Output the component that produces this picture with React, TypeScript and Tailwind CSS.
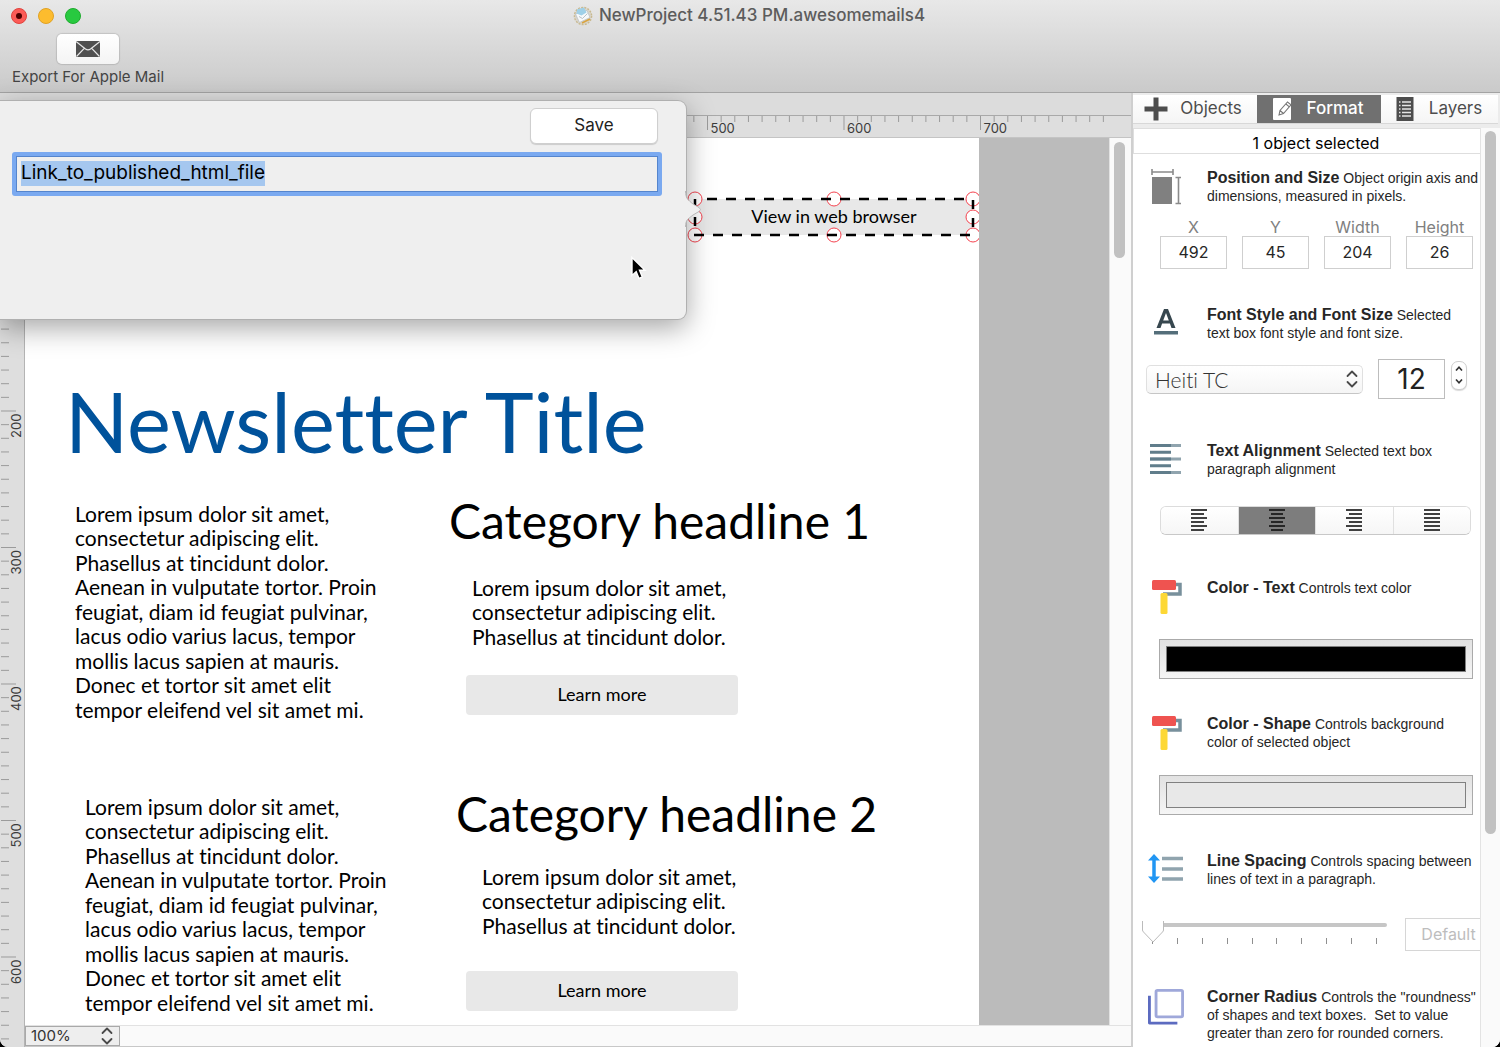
import { useState } from "react";
import type { ReactNode } from "react";
import clsx from "clsx";

// rulers and canvas are drawn at this many pixels per document unit
const SCALE = 1.365;

const LOREM = [
  "Lorem ipsum dolor sit amet,",
  "consectetur adipiscing elit.",
  "Phasellus at tincidunt dolor.",
  "Aenean in vulputate tortor. Proin",
  "feugiat, diam id feugiat pulvinar,",
  "lacus odio varius lacus, tempor",
  "mollis lacus sapien at mauris.",
  "Donec et tortor sit amet elit",
  "tempor eleifend vel sit amet mi.",
];

const ALIGNMENTS = ["left", "center", "right", "justify"] as const;

function TitleBar() {
  return (
    <header className="relative h-[93px] shrink-0 border-b border-[#a3a3a3] bg-linear-to-b from-[#e8e8e8] to-[#cacaca]">
      <div className="flex h-8 items-center">
        <div className="flex flex-1 gap-[11px] pb-px pl-[11px]">
          <button aria-label="Close" className="flex size-4 items-center justify-center rounded-full border border-[#e0443e] bg-[#fc5b57]">
            <span className="size-[6px] rounded-full bg-[#4d0000]" />
          </button>
          <button aria-label="Minimize" className="size-4 rounded-full border border-[#e0a225] bg-[#fdbc2e]" />
          <button aria-label="Zoom" className="size-4 rounded-full border border-[#1fac2e] bg-[#28c940]" />
        </div>
        <div className="flex items-center gap-[6px]">
          <DocumentIcon />
          <h1 className="text-[17px] font-medium text-[#5c5c5c]">NewProject 4.51.43 PM.awesomemails4</h1>
        </div>
        <div className="flex-1 pr-[13px]" />
      </div>
      <div className="flex w-[176px] flex-col items-center pt-[2px]">
        <button
          id="export"
          aria-labelledby="export-label"
          className="flex h-[30px] w-[62px] items-center justify-center rounded-[5px] bg-linear-to-b from-white to-[#f4f4f4] shadow-[0_0_1px_1px_rgba(0,0,0,0.12)]"
        >
          <svg width="24" height="16" viewBox="0 0 24 16">
            <rect width="24" height="16" fill="#505050" />
            <path d="M0 0.5 L9.5 8 Q12 9.8 14.5 8 L24 0.5 M0.5 15.5 L8.5 7.2 M23.5 15.5 L15.5 7.2" fill="none" stroke="#e8e8e8" strokeWidth="1.2" />
          </svg>
        </button>
        <label id="export-label" htmlFor="export" className="mt-[3px] text-[15px] leading-5 text-[#444]">
          Export For Apple Mail
        </label>
      </div>
    </header>
  );
}

function DocumentIcon() {
  return (
    <svg width="20" height="20" viewBox="0 0 20 20">
      <circle cx="10" cy="10" r="8.6" fill="#d9d5cb" stroke="#c9b98f" strokeWidth="1.4" strokeDasharray="2 1.2" />
      <path d="M2.5 8 L14 4.5 L17 11.5 L6.5 16.5 Z" fill="#f6f8fa" stroke="#b7bdc2" strokeWidth="0.7" />
      <path d="M4 3.5 L11 1.5 L13.5 6.5 L8.5 9.5 L3.5 7.5 Z" fill="#9fd0e8" />
      <path d="M6 10.5 L9.5 12.5 L14.5 7.5" fill="none" stroke="#b9c0c5" />
      <path d="M9 17 L17 13" stroke="#d9a441" strokeWidth="1.6" />
    </svg>
  );
}

function HorizontalRuler() {
  const ticks = Array.from({ length: 80 }, (_, i) => i);
  return (
    <svg className="block h-[23px] w-full border-y border-t-[#a9a9a9] border-b-[#c4c4c4] bg-[#dedede]">
      {ticks.map((i) => {
        const x = 25 + i * 10 * SCALE;
        const major = i % 10 === 0;
        return (
          <g key={i}>
            <line x1={x} x2={x} y1="0" y2={major ? 14 : 6} stroke="#9b9b9b" />
            {major && (
              <text x={x + 3} y="17" fontSize="13" fill="#3c3c3c">
                {i * 10}
              </text>
            )}
          </g>
        );
      })}
    </svg>
  );
}

function VerticalRuler() {
  const ticks = Array.from({ length: 67 }, (_, i) => i);
  return (
    <svg className="block h-full w-[25px] shrink-0 border-r border-[#b4b4b4] bg-[#dedede]">
      {ticks.map((i) => {
        const y = i * 10 * SCALE;
        const major = i % 10 === 0;
        return (
          <g key={i}>
            <line x1="1" x2={major ? 16 : 9} y1={y} y2={y} stroke="#9b9b9b" />
            {major && (
              <text transform={`translate(21 ${y + 27}) rotate(-90)`} fontSize="13" fill="#3c3c3c">
                {i * 10}
              </text>
            )}
          </g>
        );
      })}
    </svg>
  );
}

function TextBox({ lines, className }: { lines: string[]; className: string }) {
  return (
    <p className={clsx("absolute text-[21px] leading-6 whitespace-nowrap text-black", className)}>
      {lines.map((line) => (
        <span key={line} className="block odd:h-6 even:h-[25px]">
          {line}
        </span>
      ))}
    </p>
  );
}

function SelectionHandles() {
  const handles = [
    [8, 8], [147, 8], [286, 8],
    [8, 26], [286, 26],
    [8, 44], [147, 44], [286, 44],
  ];
  return (
    <svg className="pointer-events-none absolute top-[53px] left-[662px]" width="294" height="52">
      {handles.map(([x, y]) => (
        <circle key={`${x}-${y}`} cx={x} cy={y} r="7" fill="#fff" stroke="#f4434f" />
      ))}
      <g stroke="#000" strokeWidth="2.5">
        <path d="M20 8 H286" strokeDasharray="10 9" />
        <path d="M7 44 H286" strokeDasharray="10 9" />
        <path d="M8 8 V44 M286 9 V44" strokeDasharray="9 9" />
      </g>
    </svg>
  );
}

function Page() {
  return (
    <article className="relative h-full w-[954px] overflow-hidden bg-white font-[Lato,sans-serif] [font-variant-ligatures:none]">
      <button className="absolute top-[61px] left-[670px] h-9 w-[278px] bg-[#e8e8e8] pb-[2px] text-[18px] text-black">View in web browser</button>
      <SelectionHandles />

      <h2 className="absolute top-[233px] left-[40px] text-[83px] leading-[100px] whitespace-nowrap text-[#00529b]">Newsletter Title</h2>

      <TextBox className="top-[364px] left-[50px]" lines={LOREM} />
      <h3 className="absolute top-[355px] left-[424px] text-[48px] leading-[56px] whitespace-nowrap text-black">Category headline 1</h3>
      <TextBox className="top-[438px] left-[447px]" lines={LOREM.slice(0, 3)} />
      <button className="absolute top-[537px] left-[441px] h-10 w-[272px] rounded bg-[#e8e8e8] pb-[2px] text-[18px] text-black">Learn more</button>

      <TextBox className="top-[657px] left-[60px]" lines={LOREM} />
      <h3 className="absolute top-[648px] left-[431px] text-[48px] leading-[56px] whitespace-nowrap text-black">Category headline 2</h3>
      <TextBox className="top-[727px] left-[457px]" lines={LOREM.slice(0, 3)} />
      <button className="absolute top-[833px] left-[441px] h-10 w-[272px] rounded bg-[#e8e8e8] pb-[2px] text-[18px] text-black">Learn more</button>
    </article>
  );
}

function UpDown({ className }: { className?: string }) {
  return (
    <svg className={clsx("pointer-events-none", className)} width="12" height="18" viewBox="0 0 12 18" fill="none" stroke="#4a4a4a" strokeWidth="1.8" strokeLinecap="round" strokeLinejoin="round">
      <path d="M1.5 6 L6 1.5 L10.5 6 M1.5 12 L6 16.5 L10.5 12" />
    </svg>
  );
}

function Editor() {
  return (
    <main className="flex min-w-0 flex-1 flex-col">
      <div className="h-[22px] shrink-0 bg-[#dcdcdc]" />
      <HorizontalRuler />
      <div className="flex min-h-0 flex-1">
        <VerticalRuler />
        <div className="flex min-w-0 flex-1 flex-col">
          <div className="flex min-h-0 flex-1">
            <div className="min-w-0 flex-1 overflow-hidden bg-[#bbb]">
              <Page />
            </div>
            <div className="flex w-[22px] shrink-0 border-l border-[#e2e2e2] bg-[#fafafa] pt-1 pl-1">
              <div className="h-[116px] w-[11px] rounded-full bg-[#c1c1c1]" />
            </div>
          </div>
          <div className="flex h-[22px] shrink-0 border-t border-b border-t-[#e2e2e2] border-b-[#c8c8c8] bg-[#fafafa]">
            <div className="relative flex w-[95px] items-center border border-[#a9a9a9] bg-[#eee]">
              <select aria-label="Zoom level" className="w-full appearance-none pl-[5px] text-[15px] leading-5 text-[#333]">
                <option>100%</option>
                <option>200%</option>
              </select>
              <UpDown className="absolute right-[6px]" />
            </div>
          </div>
        </div>
      </div>
    </main>
  );
}

function LinkPopover() {
  const [link, setLink] = useState("Link_to_published_html_file");
  return (
    <div role="dialog" aria-label="Link" className="absolute top-[100px] left-0 h-[220px] w-[687px] rounded-r-[9px] border border-l-0 border-[#b0b0b0] bg-[#efefef] shadow-[0_8px_28px_rgba(0,0,0,0.35)]">
      <div className="flex justify-end pt-[7px] pr-[28px]">
        <button className="h-9 w-[128px] rounded-md border border-[#cfcfcf] bg-white text-[17px] text-[#222] shadow-[0_1px_1px_rgba(0,0,0,0.15)]">Save</button>
      </div>
      <div className="mt-[8px] ml-[12px] w-[650px] rounded-[3px] bg-[#7aa9f0] p-1">
        <div className="flex h-9 items-center border border-[#5585cd] bg-[#efefef] px-1 pb-[2px]">
          <input
            aria-label="Link address"
            value={link}
            onChange={(e) => setLink(e.target.value)}
            className="field-sizing-content h-[25px] bg-[#a5c7ef] text-[19px] text-black outline-none"
          />
        </div>
      </div>
      <svg className="absolute top-[90px] -right-[16px]" width="17" height="36" viewBox="0 0 17 36">
        <path d="M0 0 C0 7 3 9 8 13 L14 16.5 Q17 18.5 14 20.500 L8 24 C3 28 0 29 0 36 Z" fill="#efefef" />
        <path d="M0.500 0 C0.500 7 3 9 8 13 L14 16.500 Q17 18.500 14 20.500 L8 24 C3 28 0.500 29 0.500 36" fill="none" stroke="#b8b8b8" />
      </svg>
    </div>
  );
}

function Cursor() {
  return (
    <svg className="pointer-events-none absolute top-[256px] left-[630px]" width="18" height="25" viewBox="0 0 18 25">
      <path d="M2 1.500 V19.500 L6.200 15.600 L9 22.500 L12.300 21 L9.500 14.300 H15 Z" fill="#000" stroke="#fff" strokeWidth="1.400" />
    </svg>
  );
}

function SizeIcon() {
  return (
    <svg width="36" height="36" viewBox="0 0 36 36">
      <rect x="4" y="8" width="20" height="27" fill="#808080" />
      <path d="M4 3 H25 M4 0 V6 M25 0 V6 M30.500 8.500 V34.500 M27.500 8.500 H33 M27.500 34.500 H33" fill="none" stroke="#8a8a8a" strokeWidth="1.600" />
    </svg>
  );
}

function FontIcon() {
  return (
    <svg width="36" height="36" viewBox="0 0 36 36">
      <path fillRule="evenodd" d="M16 3 H20 L27.500 22 H23.500 L21.900 17.500 H14.100 L12.500 22 H8.500 Z M18 7 L15.200 14.500 H20.800 Z" fill="#37474f" />
      <rect x="6" y="25" width="24" height="3.500" fill="#546e7a" />
    </svg>
  );
}

function AlignIcon() {
  return (
    <svg width="36" height="36" viewBox="0 0 36 36">
      <path d="M2 3.500 H33 M2 17 H33 M2 30.500 H33" stroke="#90a4ae" strokeWidth="3" />
      <path d="M2 3.500 H23 M2 10.200 H23 M2 17 H23 M2 23.800 H23 M2 30.500 H23" stroke="#607d8b" strokeWidth="3" />
    </svg>
  );
}

function PaintRollerIcon() {
  return (
    <svg width="36" height="36" viewBox="0 0 36 36">
      <path d="M27 5.500 H32 V15 H15" fill="none" stroke="#78909c" strokeWidth="3.500" />
      <rect x="4" y="1" width="24" height="10" rx="1.500" fill="#ef5350" />
      <rect x="12.500" y="14" width="7" height="21" rx="1.500" fill="#fdd835" />
    </svg>
  );
}

function SpacingIcon() {
  return (
    <svg width="36" height="36" viewBox="0 0 36 36">
      <path d="M6 5 V27" stroke="#2196f3" strokeWidth="3.500" />
      <path d="M0 8.500 L6 2 L12 8.500 Z M0 24.500 L6 31 L12 24.500 Z" fill="#2196f3" />
      <path d="M14 6.500 H35 M14 17 H35 M14 27 H35" stroke="#90a4ae" strokeWidth="3.500" />
    </svg>
  );
}

function CornerIcon() {
  return (
    <svg width="38" height="38" viewBox="0 0 38 38">
      <path d="M1.500 7 V36 H31" fill="none" stroke="#5c6bc0" strokeWidth="3" strokeLinejoin="round" />
      <rect x="8.500" y="1.500" width="28" height="28" rx="1.500" fill="#fff" stroke="#9fa8da" strokeWidth="3" />
    </svg>
  );
}

function Section({ icon, title, text, children }: { icon: ReactNode; title: string; text: string; children?: ReactNode }) {
  return (
    <section className="shrink-0 odd:h-[137px] even:h-[136px]">
      <div className="flex h-16 gap-[23px] pt-[15px] pl-[15px]">
        <div className="flex w-9 shrink-0 items-start justify-center">{icon}</div>
        <p className="w-[276px] shrink-0 font-[Liberation_Sans,sans-serif] text-[14px] leading-[18px] whitespace-pre-line text-[#262626]">
          <strong className="text-[16px]">{title}</strong> {text}
        </p>
      </div>
      {children}
    </section>
  );
}

function NumberField({ label, value }: { label: string; value: number }) {
  return (
    <label className="flex w-[67px] flex-col items-center text-[16px] leading-[18px] text-[#808080]">
      {label}
      <input defaultValue={value} className="h-[33px] w-full border border-[#cfcfcf] bg-white pb-px text-center text-[16px] text-[#262626]" />
    </label>
  );
}

function ColorWell({ label, value }: { label: string; value: string }) {
  const [color, setColor] = useState(value);
  return (
    <input
      type="color"
      aria-label={label}
      value={color}
      onChange={(e) => setColor(e.target.value)}
      className="mt-[11px] ml-[26px] block h-10 w-[314px] appearance-none border border-[#aaa] bg-linear-to-b from-[#e2e2e2] to-[#f5f5f5] p-[6px] [&::-webkit-color-swatch]:rounded-none [&::-webkit-color-swatch]:border [&::-webkit-color-swatch]:border-[#808080] [&::-webkit-color-swatch-wrapper]:p-0"
    />
  );
}

// start and end of each of the six rules in an alignment glyph
const GLYPH_LINES = {
  left: [[0, 16], [0, 13], [0, 16], [0, 13], [0, 16], [0, 13]],
  center: [[0, 16], [2, 14], [0, 16], [2, 14], [0, 16], [2, 14]],
  right: [[0, 16], [3, 16], [0, 16], [3, 16], [0, 16], [3, 16]],
  justify: [[0, 16], [0, 16], [0, 16], [0, 16], [0, 16], [0, 16]],
};

function AlignmentControl() {
  const [align, setAlign] = useState<(typeof ALIGNMENTS)[number]>("center");
  return (
    <div className="mt-[15px] ml-[27px] flex h-[29px] w-[311px] divide-x divide-[#e0e0e0] overflow-hidden rounded-md border border-[#dcdcdc] border-b-[#c8c8c8]">
      {ALIGNMENTS.map((a) => (
        <button
          key={a}
          aria-label={`Align ${a}`}
          aria-pressed={align === a}
          onClick={() => setAlign(a)}
          className={clsx("flex flex-1 items-center justify-center", align === a ? "bg-[#7d7d7d]" : "bg-linear-to-b from-white to-[#f6f6f6]")}
        >
          <svg width="16" height="23" viewBox="0 0 16 23" stroke={align === a ? "#262626" : "#404040"} strokeWidth="2">
            {GLYPH_LINES[a].map(([from, to], i) => (
              <line key={i} x1={from} x2={to} y1={1 + i * 4} y2={1 + i * 4} />
            ))}
          </svg>
        </button>
      ))}
    </div>
  );
}

function FontControls() {
  const [size, setSize] = useState(12);
  return (
    <div className="mt-[4px] flex items-center pl-[13px]">
      <div className="relative flex h-[29px] w-[217px] items-center rounded-[5px] border border-[#e0e0e0] border-b-[#c6c6c6] bg-linear-to-b from-white to-[#f5f5f5]">
        <select aria-label="Font" className="w-full appearance-none pl-2 font-[Lato,sans-serif] text-[21px] leading-[27px] font-light text-[#333] [font-variant-ligatures:none]">
          <option>Heiti TC</option>
          <option>Helvetica</option>
        </select>
        <UpDown className="absolute right-[4px]" />
      </div>
      <input
        aria-label="Font size"
        value={size}
        onChange={(e) => setSize(Number(e.target.value))}
        className="ml-[15px] h-10 w-[67px] border border-[#bdbdbd] bg-white text-center text-[28px] text-[#222]"
      />
      <div className="mb-2 ml-[6px] flex h-[29px] w-4 flex-col rounded-[7px] border border-[#cfcfcf] bg-white shadow-[0_1px_1px_rgba(0,0,0,0.15)]">
        <button aria-label="Increase" onClick={() => setSize(size + 1)} className="flex flex-1 items-center justify-center">
          <svg width="8" height="5" viewBox="0 0 8 5" fill="none" stroke="#333" strokeWidth="1.600"><path d="M1 4.500 L4 1.200 L7 4.500" /></svg>
        </button>
        <button aria-label="Decrease" onClick={() => setSize(size - 1)} className="flex flex-1 items-center justify-center">
          <svg width="8" height="5" viewBox="0 0 8 5" fill="none" stroke="#333" strokeWidth="1.600"><path d="M1 0.500 L4 3.800 L7 0.500" /></svg>
        </button>
      </div>
    </div>
  );
}

function SpacingSlider() {
  const [spacing, setSpacing] = useState(0);
  return (
    <div className="mt-[17px] flex items-start pl-[9px]">
      <div className="relative h-7 w-[245px] shrink-0">
        <input
          type="range"
          aria-label="Line spacing"
          min={0}
          max={9}
          value={spacing}
          onChange={(e) => setSpacing(Number(e.target.value))}
          className="mt-[5px] block h-1 w-full appearance-none rounded-full bg-[#c6c6c6] [&::-webkit-slider-thumb]:opacity-0"
        />
        <div className="mt-[11px] flex justify-between px-[10px]">
          {Array.from({ length: 10 }, (_, i) => (
            <span key={i} className="h-[6px] w-px bg-[#8f8f8f]" />
          ))}
        </div>
        <svg className="pointer-events-none absolute top-0" style={{ left: spacing * 25 }} width="22" height="25" viewBox="0 0 22 25">
          <path d="M0.500 3 Q0.500 0.500 3 0.500 H19 Q21.500 0.500 21.500 3 V12 Q21.500 13 20.500 14 L11 24 L1.500 14 Q0.500 13 0.500 12 Z" fill="#fff" />
          <path d="M0.500 3 V12 Q0.500 13 1.500 14 L11 24 L20.500 14 Q21.500 13 21.500 12 V3" fill="none" stroke="#bbb" />
        </svg>
      </div>
      <input aria-label="Line spacing value" placeholder="Default" className="ml-[18px] h-[33px] w-[87px] shrink-0 border border-[#d6d6d6] pb-px text-center text-[16px] placeholder:text-[#bdbdbd]" />
    </div>
  );
}

const TABS = [
  {
    name: "Objects",
    width: "w-[124px]",
    icon: (
      <svg width="24" height="24" viewBox="0 0 24 24">
        <path d="M12 0.500 V23.500 M0.500 12 H23.500" stroke="#4d4d4d" strokeWidth="5" />
      </svg>
    ),
  },
  {
    name: "Format",
    width: "w-[124px]",
    icon: (
      <svg width="24" height="24" viewBox="0 0 24 24">
        <rect x="3" y="1" width="18" height="22" rx="1" fill="#fff" />
        <path d="M9 18 L10 13.500 L17.500 5 L21 7.800 L13.500 16.500 Z M10 13.500 L13.500 16.500 M16 7 L19.300 9.800" fill="none" stroke="#777" strokeWidth="1.100" />
      </svg>
    ),
  },
  {
    name: "Layers",
    width: "flex-1",
    icon: (
      <svg width="24" height="24" viewBox="0 0 24 24">
        <rect x="3.500" width="17" height="24" fill="#4d4d4d" />
        <path d="M9 5 H18 M9 8.500 H18 M9 12 H18 M9 15.500 H18 M9 19 H18 M6 5 H7.500 M6 8.500 H7.500 M6 12 H7.500 M6 15.500 H7.500 M6 19 H7.500" stroke="#e4e4e4" strokeWidth="1.300" />
      </svg>
    ),
  },
];

function Inspector() {
  const [tab, setTab] = useState("Format");
  return (
    <aside className="flex w-[369px] shrink-0 flex-col border-l-2 border-[#cfcfcf] bg-[#ececec]">
      <div role="tablist" className="mt-[2px] mr-[2px] flex h-[29px] shrink-0 border-b border-[#d8d8d8]">
        {TABS.map(({ name, width, icon }) => (
          <button
            key={name}
            role="tab"
            aria-selected={tab === name}
            onClick={() => setTab(name)}
            className={clsx(
              "flex items-center justify-center gap-3 pr-1 text-[17px]",
              width,
              tab === name ? "bg-[#707070] font-medium text-white" : "bg-linear-to-b from-white to-[#f5f5f5] text-[#4d4d4d]"
            )}
          >
            {icon}
            {name}
          </button>
        ))}
      </div>
      <div className="mt-[4px] flex min-h-0 flex-1">
        <div className="flex min-w-0 flex-1 flex-col overflow-hidden border-r border-[#e3e3e3] bg-white">
          <p className="h-[26px] shrink-0 border border-r-0 border-[#dedede] pl-[18px] text-center text-[16px] leading-[29px] text-black">1 object selected</p>
          <div>
            <Section icon={<SizeIcon />} title="Position and Size" text={"Object origin axis and\ndimensions, measured in pixels."}>
              <div className="flex gap-[15px] pl-[27px]">
                <NumberField label="X" value={492} />
                <NumberField label="Y" value={45} />
                <NumberField label="Width" value={204} />
                <NumberField label="Height" value={26} />
              </div>
            </Section>
            <Section icon={<FontIcon />} title="Font Style and Font Size" text={"Selected\ntext box font style and font size."}>
              <FontControls />
            </Section>
            <Section icon={<AlignIcon />} title="Text Alignment" text={"Selected text box\nparagraph alignment"}>
              <AlignmentControl />
            </Section>
            <Section icon={<PaintRollerIcon />} title="Color - Text" text="Controls text color">
              <ColorWell label="Text color" value="#000000" />
            </Section>
            <Section icon={<PaintRollerIcon />} title="Color - Shape" text={"Controls background\ncolor of selected object"}>
              <ColorWell label="Shape color" value="#e8e8e8" />
            </Section>
            <Section icon={<SpacingIcon />} title="Line Spacing" text={"Controls spacing between\nlines of text in a paragraph."}>
              <SpacingSlider />
            </Section>
            <Section icon={<CornerIcon />} title="Corner Radius" text={'Controls the "roundness"\nof shapes and text boxes.\u00a0 Set to value\ngreater than zero for rounded corners.'} />
          </div>
        </div>
        <div className="flex w-[19px] shrink-0 justify-center bg-[#fafafa] pt-[3px]">
          <div className="h-[703px] w-[11px] rounded-full bg-[#c1c1c1]" />
        </div>
      </div>
    </aside>
  );
}

export default function App() {
  return (
    <div className="h-screen bg-black font-[Inter,sans-serif]">
      <div className="relative flex h-full flex-col overflow-hidden rounded-b-lg bg-[#ececec]">
        <TitleBar />
        <div className="flex min-h-0 flex-1">
          <Editor />
          <Inspector />
        </div>
        <LinkPopover />
        <Cursor />
      </div>
    </div>
  );
}
